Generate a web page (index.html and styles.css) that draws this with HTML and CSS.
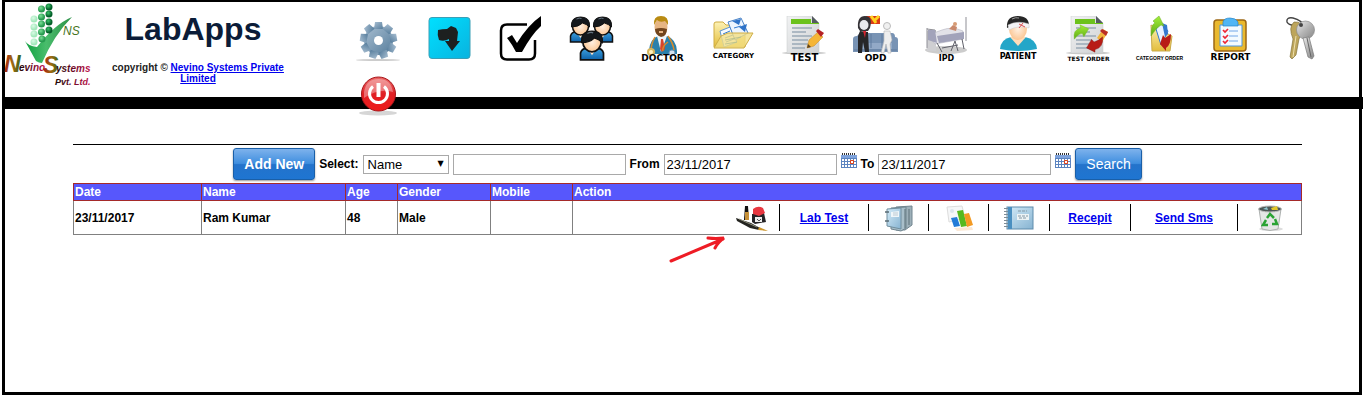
FILE: index.html
```html
<!DOCTYPE html>
<html lang="en">
<head>
<meta charset="utf-8">
<title>LabApps</title>
<link rel="stylesheet" href="styles.css">
</head>
<body>
<svg class="defs" width="0" height="0" aria-hidden="true">
  <defs>
    <linearGradient id="steel" x1="0" y1="0" x2="1" y2="1"><stop offset="0" stop-color="#a9bfd2"/><stop offset="1" stop-color="#557c9b"/></linearGradient>
    <linearGradient id="cyan" x1="0" y1="0" x2="1" y2="1"><stop offset="0" stop-color="#00e0ff"/><stop offset="1" stop-color="#09b3df"/></linearGradient>
    <radialGradient id="skin"><stop offset="0" stop-color="#fff0e2"/><stop offset="1" stop-color="#fbc795"/></radialGradient>
    <linearGradient id="shirt" x1="0" y1="0" x2="0" y2="1"><stop offset="0" stop-color="#3fa3e0"/><stop offset="1" stop-color="#0e62aa"/></linearGradient>
    <linearGradient id="folder" x1="0" y1="0" x2="0" y2="1"><stop offset="0" stop-color="#fdf2b4"/><stop offset="1" stop-color="#e3bd3c"/></linearGradient>
    <linearGradient id="paper" x1="0" y1="0" x2="1" y2="1"><stop offset="0" stop-color="#f1f2f3"/><stop offset="1" stop-color="#cfd1d3"/></linearGradient>
    <linearGradient id="lime" x1="0" y1="0" x2="0" y2="1"><stop offset="0" stop-color="#a4ee3c"/><stop offset="1" stop-color="#5cab10"/></linearGradient>
    <linearGradient id="leaf" x1="0" y1="0" x2="1" y2="0"><stop offset="0" stop-color="#10a040"/><stop offset=".45" stop-color="#49bd6c"/><stop offset="1" stop-color="#2c9148"/></linearGradient>
    <linearGradient id="rust" x1="0" y1="0" x2="1" y2="0"><stop offset="0" stop-color="#a21b10"/><stop offset=".5" stop-color="#a06a10"/><stop offset="1" stop-color="#356318"/></linearGradient>
    <linearGradient id="wine" x1="0" y1="0" x2="1" y2="0"><stop offset="0" stop-color="#1a0508"/><stop offset="1" stop-color="#c2104c"/></linearGradient>
    <radialGradient id="dotdark" cx=".4" cy=".35"><stop offset="0" stop-color="#39c469"/><stop offset="1" stop-color="#04602a"/></radialGradient>
    <radialGradient id="dotmid" cx=".4" cy=".35"><stop offset="0" stop-color="#7adf96"/><stop offset="1" stop-color="#279b50"/></radialGradient>
    <radialGradient id="dotpale" cx=".4" cy=".35"><stop offset="0" stop-color="#d9fbe5"/><stop offset="1" stop-color="#a4e8bc"/></radialGradient>
    <linearGradient id="red" x1="0" y1="0" x2="0" y2="1"><stop offset="0" stop-color="#ea6868"/><stop offset=".5" stop-color="#e02025"/><stop offset="1" stop-color="#ef1a1a"/></linearGradient>
    <linearGradient id="silver" x1="0" y1="0" x2="1" y2="1"><stop offset="0" stop-color="#ededed"/><stop offset=".5" stop-color="#b4b4b4"/><stop offset="1" stop-color="#868686"/></linearGradient>
    <linearGradient id="book" x1="0" y1="0" x2="1" y2="1"><stop offset="0" stop-color="#d4ebf8"/><stop offset="1" stop-color="#86b3d1"/></linearGradient>
    <symbol id="man" viewBox="0 0 22 27">
      <path d="M1 26v-6q1-4 6-4.500h8q5 .5 6 4.500v6z" fill="url(#shirt)" stroke="#111" stroke-width="1.500"/>
      <path d="M7 16l4 6 4-6z" fill="#ffe4c8"/>
      <ellipse cx="11" cy="10.500" rx="8" ry="8.500" fill="url(#skin)" stroke="#111" stroke-width="1.500"/>
      <path d="M2 11Q1 1 11 1t9 10q-3-3-7-4-4 4-11 4z" fill="#14181c" stroke="#111"/>
      <path d="M7 3q3-1.500 5-.5" stroke="#657480" fill="none"/>
    </symbol>
    <symbol id="sheet" viewBox="0 0 45 45">
      <ellipse cx="22" cy="37" rx="22" ry="1.500" fill="#c9c9c9"/>
      <path d="M5 0h25l7 7v30H5z" fill="url(#paper)" stroke="#c6c8ca" stroke-width=".5"/>
      <path d="M30 0l7 7h-7z" fill="#555b60"/>
      <path d="M9 3h20v4h8v1H9z" fill="#6cc21c"/>
      <path d="M10 12h20M10 16h14M10 20h20M10 24h16M10 28h20M10 32h13" stroke="#9aa9b7" stroke-width="1.300"/>
    </symbol>
    <symbol id="upleaf" viewBox="0 0 20 20"><path d="M1 19Q-1 7 9 5L8 1l11 5-6 10-2-4q-5 0-10 7z" fill="url(#lime)" stroke="#6eb52a" stroke-width=".5"/></symbol>
    <symbol id="downred" viewBox="0 0 20 20"><path d="M19 1q1 13-9 15l0 3L0 14 6 4l3 3q5-1 10-6z" fill="#b81c16" stroke="#861410" stroke-width=".5"/></symbol>
    <symbol id="calendar" viewBox="0 0 16 16">
      <path d="M0 2h16v13H0z" fill="#5c84c0"/><path d="M0 2h16v3H0z" fill="#7fa3dc"/>
      <path d="M1 1h14" stroke="#333" stroke-width="2" stroke-dasharray="1 1"/>
      <path d="M1 6h2v2H1zM4 6h2v2H4zM7 6h2v2H7zM10 6h2v2h-2zM13 6h2v2h-2zM1 9h2v2H1zM4 9h2v2H4zM7 9h2v2H7zM13 9h2v2h-2zM1 12h2v2H1zM4 12h2v2H4zM7 12h2v2H7zM10 12h2v2h-2zM13 12h2v2h-2z" fill="#fff"/>
      <path d="M9.500 7.500h3v3h-3z" fill="#fff" stroke="#e04218"/>
    </symbol>
  </defs>
</svg>
<div class="frame">
  <header class="header">
    <svg class="logo" viewBox="0 0 87 88" role="img" aria-label="Nevino Systems Pvt. Ltd.">
      <path d="M20 39q3 5 12 6Q50 22 67 15q-18 18-30 46-3 0-6-2z" fill="url(#leaf)"/>
      <g fill="url(#dotpale)"><circle cx="29" cy="17" r="3.500"/><circle cx="29" cy="25" r="3.500"/><circle cx="29" cy="32" r="3.500"/><circle cx="29" cy="40" r="3.500"/></g>
      <g fill="url(#dotmid)"><circle cx="36.500" cy="7" r="3.500"/><circle cx="36.500" cy="15" r="3.500"/><circle cx="36.500" cy="22" r="3.500"/><circle cx="36.500" cy="30" r="3.500"/><circle cx="37" cy="37" r="3.500"/></g>
      <g fill="url(#dotdark)"><circle cx="44" cy="5" r="3.500"/><circle cx="44" cy="12" r="3.500"/><circle cx="44" cy="20" r="3.500"/><circle cx="44" cy="28" r="3.500"/></g>
      <text x="58" y="33" class="logo-ns">NS</text>
      <text x="-1" y="70" class="logo-initial">N</text>
      <text x="14" y="69" class="logo-word">evino</text>
      <text x="38" y="71" class="logo-initial">S</text>
      <text x="51" y="70" class="logo-word">ystems</text>
      <text x="50" y="83" class="logo-word logo-small">Pvt. Ltd.</text>
    </svg>
    <div class="brand">
      <h1 class="title">LabApps</h1>
      <p class="copyright">copyright © <a href="#">Nevino Systems Private Limited</a></p>
    </div>
    <nav class="nav" aria-label="Main">
      <a class="nav-item" href="#" aria-label="Settings"><svg class="nav-icon" viewBox="0 0 45 45">
        <ellipse cx="22" cy="44" rx="22" ry="1" fill="#ccc"/>
        <g fill="url(#steel)"><circle cx="22.500" cy="24.500" r="14.500"/>
        <path d="M19 6h7l1 7h-9z"/><path d="M19 6h7l1 7h-9z" transform="rotate(40 22.500 24.500)"/><path d="M19 6h7l1 7h-9z" transform="rotate(80 22.500 24.500)"/><path d="M19 6h7l1 7h-9z" transform="rotate(120 22.500 24.500)"/><path d="M19 6h7l1 7h-9z" transform="rotate(160 22.500 24.500)"/><path d="M19 6h7l1 7h-9z" transform="rotate(200 22.500 24.500)"/><path d="M19 6h7l1 7h-9z" transform="rotate(240 22.500 24.500)"/><path d="M19 6h7l1 7h-9z" transform="rotate(280 22.500 24.500)"/><path d="M19 6h7l1 7h-9z" transform="rotate(320 22.500 24.500)"/></g>
        <circle cx="22.500" cy="24.500" r="4.500" fill="#fff"/></svg></a>
      <a class="nav-item" href="#" aria-label="Download"><svg class="nav-icon" viewBox="0 0 45 45">
        <rect x="2" y="1.500" width="41" height="41" rx="3" fill="url(#cyan)" stroke="#3b9fb6"/>
        <path d="M11 14q4-1 9-1l4-3 5 2 2 4-1 9h3l-8 10-7-10h4v-2q-5 3-10 1-2-5-1-10z" fill="#1d2020"/></svg></a>
      <a class="nav-item" href="#" aria-label="Approve"><svg class="nav-icon" viewBox="0 0 45 45">
        <path d="M29 8.500H9q-6 0-6 6v23q0 6 6 6h22q6 0 6-6V24" fill="none" stroke="#000" stroke-width="2.500"/>
        <path d="M9 22l5-3 5 8Q30 9 43 0v10Q34 18 24 36h-6q-4-8-9-14z"/></svg></a>
      <a class="nav-item" href="#" aria-label="Users"><svg class="nav-icon" viewBox="0 0 45 45">
        <use href="#man" x="0" y="0" width="23" height="27"/><use href="#man" x="22" y="0" width="23" height="27"/><use href="#man" x="8" y="14" width="30" height="31"/></svg></a>
      <a class="nav-item" href="#"><svg class="nav-icon" viewBox="0 0 45 45">
        <path d="M9 34q1-11 9-14h9q9 3 10 15v3H9z" fill="#2a80ab"/><path d="M17 20l4 16 6-16z" fill="#eef5f8"/><path d="M21 23l2 0 2 10-3 3-2-3z" fill="#d6452c"/>
        <path d="M15 21q-4 7-4 14M28 20q5 7 6 14M28 26q-6 4-5 9" fill="none" stroke="#d78b2c" stroke-width="1.500"/>
        <ellipse cx="21" cy="11" rx="6.500" ry="9" fill="#e6b583"/><path d="M14 9q-1-9 7-9t7 9l-3-4q-5 2-8-1z" fill="#b98b12"/><path d="M15 13q6-2 12 0 0 7-6 8-6-2-6-8z" fill="#72451d"/><path d="M19 15h4v2h-4z" fill="#e6b583"/>
        <circle cx="11" cy="36" r="4" fill="#d6b65f"/><circle cx="11" cy="36" r="2" fill="#fff2c0"/><circle cx="32" cy="37" r="3" fill="#d2e3f2" stroke="#7097b7"/>
        <text x="22.500" y="44.500" class="cap cap-9">DOCTOR</text></svg></a>
      <a class="nav-item" href="#"><svg class="nav-icon" viewBox="0 0 45 45">
        <path d="M3 31V8q0-2 2-2h7l3 3h19v22z" fill="url(#folder)" stroke="#cfac42"/>
        <path d="M9 15l10-4 7 15-13 5z" fill="#f7fbff" stroke="#5b94d4"/><path d="M17 6l13-4 7 15-13 7z" fill="#edf5fe" stroke="#4b84c8"/><path d="M21 5l9-2-2 6zM28 11l8-3-2 8z" fill="#2f73c8"/><path d="M12 18l7-3M14 22l8-3M15 26l8-3M23 12l7-2" stroke="#337bd0"/>
        <path d="M10 20l7-3h25l-9 15H3z" fill="#f3de85" fill-opacity=".8" stroke="#cfae47"/>
        <path d="M14 24l16-3M14 28l12-2" stroke="#9fb387" opacity=".6"/>
        <text x="22.500" y="42" class="cap cap-7">CATEGORY</text></svg></a>
      <a class="nav-item" href="#"><svg class="nav-icon" viewBox="0 0 45 45">
        <use href="#sheet" width="45" height="45"/>
        <path d="M25 32l2-8L36 16l5 5-9 9z" fill="#f5b536" stroke="#c78926" stroke-width=".5"/><path d="M25 32l1-4 3 3z" fill="#5d431f"/><path d="M34 15l2-2 6 4-3 4z" fill="#b52125"/>
        <text x="22.500" y="44.500" class="cap cap-10">TEST</text></svg></a>
      <a class="nav-item" href="#"><svg class="nav-icon" viewBox="0 0 45 45">
        <path d="M13 0h14v8H13z" fill="#d93918"/><path d="M18 0l5 7M22 4l4-4" stroke="#ffd11e" stroke-width="3"/>
        <path d="M0 23q0-3 4-3l3-3h32q3 0 3 4 3 0 3 3v12H0z" fill="#7893b4"/><path d="M5 27h34v6H5z" fill="#92a9c7"/><path d="M18 18v14M29 18v14M1 34h43" stroke="#5e7b9e"/>
        <path d="M7 15l8 1 1 20h-4l-2-10-1 11H5V20z" fill="#262628"/><path d="M5 12q-1-12 7-12t5 12l-2 3H7z" fill="#343236"/><ellipse cx="11" cy="9" rx="4.500" ry="5" fill="#e9e9ed"/><path d="M10 15h3l-1 7z" fill="#d42531"/>
        <circle cx="34" cy="10" r="3.500" fill="#f0f0f0" stroke="#bbb"/><path d="M31 15h6l2 9-2 4 1 9h-3l-2-9-2 9h-3l3-12z" fill="#eee" stroke="#b3b3b3" stroke-width=".6"/>
        <text x="22.500" y="44.500" class="cap cap-9">OPD</text></svg></a>
      <a class="nav-item" href="#"><svg class="nav-icon" viewBox="0 0 45 45">
        <ellipse cx="22" cy="34" rx="21" ry="4" fill="#ccc"/><path d="M3 15l9-1v21H3z" fill="#cfcfd2"/>
        <path d="M3 12v20M3 13l8 1v12M42 1v24" fill="none" stroke="#8f8f96"/>
        <path d="M4 19l14-5q10-4 21 1v8l-28 5z" fill="#e2e2e8" stroke="#b3b3bf" stroke-width=".6"/><path d="M4 14h7l2 13-9-3zM13 20l27-4v7l-25 4z" fill="#a2a3ba"/><path d="M25 13l4-4 4 2-1 4z" fill="#c98a6d"/><circle cx="31" cy="8" r="2" fill="#d69b74"/>
        <path d="M13 27l5 9M38 23l2 10M31 25l-4 10M31 25l3 10M18 32l16-3" stroke="#60616a"/>
        <text x="22.500" y="44.500" class="cap cap-8">IPD</text></svg></a>
      <a class="nav-item" href="#"><svg class="nav-icon" viewBox="0 0 45 45">
        <path d="M5 33q1-10 11-12h14q11 2 12 12-18 4-37 0z" fill="#24a6c8"/><path d="M15 21l8 9 8-9z" fill="#ffdcb9"/>
        <ellipse cx="23" cy="13" rx="9" ry="11" fill="url(#skin)"/><path d="M12 12Q11 0 23 0t11 12q-9-7-22 0z" fill="#262626"/><path d="M17 3q4-2 7-1" stroke="#999" fill="none"/>
        <path d="M13 9q10-5 21-1v4q-11-3-20 2z" fill="#f3f3f5" stroke="#ccc" stroke-width=".5"/><path d="M24 8l6 3M28 7l-4 5" stroke="#db4d4d"/>
        <text x="23" y="43" class="cap cap-8">PATIENT</text></svg></a>
      <a class="nav-item" href="#"><svg class="nav-icon" viewBox="0 0 45 45">
        <use href="#sheet" width="45" height="45"/><path d="M31 22l6-9 5 3-6 10z" fill="#f1b43c"/><path d="M34 15l2-2 6 3-2 4z" fill="#ba2d26"/>
        <use href="#upleaf" x="5" y="8" width="21" height="16"/><use href="#downred" x="19" y="20" width="20" height="17"/>
        <text x="22.500" y="44.500" class="cap cap-6">TEST ORDER</text></svg></a>
      <a class="nav-item" href="#"><svg class="nav-icon" viewBox="0 0 45 45">
        <path d="M14 9l9 5 12 6-2 15H15z" fill="url(#folder)" stroke="#c9aa4a"/><path d="M19 13l5-6 7 8-7 14z" fill="#e9f3fe" stroke="#3479cf"/><path d="M25 7l5 2 1 9-3 3z" fill="#3479cf"/>
        <path d="M14 20Q14 8 18 7l-2-2 6-5 5 10-3-1q-5 3-10 11z" fill="url(#lime)" stroke="#66aa20" stroke-width=".5"/>
        <path d="M34 18q0 11-5 14v3l-6-7 3-9 2 3z" fill="#b81c16"/>
        <text x="22.500" y="44" class="cap cap-5">CATEGORY ORDER</text></svg></a>
      <a class="nav-item" href="#"><svg class="nav-icon" viewBox="0 0 45 45">
        <rect x="6" y="4" width="32" height="31" rx="3" fill="#eab92e" stroke="#9c6714" stroke-width="1.500"/><path d="M12 9h22v21H12z" fill="#f3faff" stroke="#4d96df"/>
        <path d="M15 10V6q1-4 7-4t8 4v4z" fill="#50b5f5" stroke="#2785c8" stroke-width=".7"/>
        <path d="M21 15h9M21 20h9M21 25h9" stroke="#70a6e8"/><path d="M15 14l2 2 3-3M15 20l2 2 3-3M15 25l2 2 3-3" fill="none" stroke="#ed2634" stroke-width="1.700"/>
        <text x="22.500" y="44" class="cap cap-9">REPORT</text></svg></a>
      <a class="nav-item" href="#" aria-label="Password"><svg class="nav-icon" viewBox="0 0 45 45">
        <path d="M18 9q-8 1-10-3-1-5 6-4 9 2 11 9" fill="none" stroke="#444" stroke-width="1.500"/>
        <path d="M15 6q9-1 9 9l-4 8-3 16-4 4-2-2 3-18q-5-12 1-17z" fill="#bda55b" stroke="#75642f" stroke-width=".6"/><path d="M17 20l-3 21" stroke="#eee0ae"/>
        <circle cx="26.500" cy="14" r="9" fill="url(#silver)" stroke="#898989" stroke-width=".7"/><path d="M24 22l6-1 5 19-2 3-4-2z" fill="url(#silver)" stroke="#777" stroke-width=".7"/><path d="M28 22l4 19" stroke="#666"/><circle cx="22" cy="9" r="2" fill="#444"/></svg></a>
      <a class="nav-item" href="#" aria-label="Log out"><svg class="nav-icon" viewBox="0 0 45 45">
        <ellipse cx="22" cy="38" rx="19" ry="2.500" fill="#bbb" opacity=".6"/><circle cx="22.500" cy="19" r="17" fill="url(#red)" stroke="#a9171b"/>
        <path d="M8 17q2-13 14.500-13T37 17q-14-4-29 6z" fill="#fff" opacity=".35"/>
        <path d="M17 11.500a9 9 0 1 0 11 0" fill="none" stroke="#fff" stroke-width="3"/><path d="M20.500 8h4v14h-4z" fill="#fff"/></svg></a>
    </nav>
  </header>
  <div class="bar"></div>
  <main class="content">
    <form class="filters">
      <button class="btn btn-strong" type="button">Add New</button>
      <label class="label" for="field">Select:</label>
      <span class="picker"><select class="select" id="field"><option>Name</option><option>Mobile</option></select></span>
      <input class="input" type="text" aria-label="Search text">
      <label class="label" for="from">From</label>
      <input class="input" id="from" type="text" value="23/11/2017">
      <button class="cal" type="button" aria-label="Pick start date"><svg class="cal-icon"><use href="#calendar"/></svg></button>
      <label class="label" for="to">To</label>
      <input class="input" id="to" type="text" value="23/11/2017">
      <button class="cal" type="button" aria-label="Pick end date"><svg class="cal-icon"><use href="#calendar"/></svg></button>
      <button class="btn" type="submit">Search</button>
    </form>
    <div class="results">
      <table class="table">
        <colgroup><col class="c-date"><col class="c-name"><col class="c-age"><col class="c-gender"><col class="c-mobile"><col></colgroup>
        <thead><tr><th>Date</th><th>Name</th><th>Age</th><th>Gender</th><th>Mobile</th><th>Action</th></tr></thead>
        <tbody><tr><td>23/11/2017</td><td>Ram Kumar</td><td>48</td><td>Male</td><td></td>
          <td class="action-cell"><div class="actions">
            <a class="action w-56" href="#" aria-label="Sign"><svg class="action-icon" viewBox="0 0 32 28">
              <path d="M9 2h3l1 14H8z" fill="#111"/><path d="M9 8h4v8H9z" fill="#c69038"/>
              <path d="M16 10l12-1 2 9-11 2-3-2z" fill="#252326"/><path d="M17 5q5-4 10-1l2 5-6 3-6-2z" fill="#e83740"/><path d="M19 13h7v5h-7z" fill="#eee"/><path d="M21 15l2 2 2-2" stroke="#555" fill="none"/>
              <path d="M0 14l15 5 9 5-1 2-9-2L1 17z" fill="#242420"/><path d="M3 15l18 8" stroke="#8b8b78"/><path d="M23 23l9 4-10-1z" fill="#cc952d"/></svg></a>
            <a class="action w-89" href="#">Lab Test</a>
            <a class="action w-60" href="#" aria-label="Files"><svg class="action-icon" viewBox="0 0 32 28">
              <path d="M13 3l16-1v19l-7 5H13z" fill="#9db0b9" stroke="#71858f"/><path d="M8 4l15-1v21l-5 3-10-2z" fill="#a9bfca" stroke="#71858f"/><path d="M4 5l14-1v21L4 22z" fill="url(#book)" stroke="#708e9e"/><path d="M8 8l8-1v6H8z" fill="#eff6f9"/><path d="M10 9h5M10 11h5" stroke="#9cafba" stroke-width=".6"/><path d="M2 8h4M2 17h4" stroke="#586b74" stroke-width="1.500"/><path d="M22 5v19M26 5v16" stroke="#5c7079"/></svg></a>
            <a class="action w-60" href="#" aria-label="Charts"><svg class="action-icon" viewBox="0 0 32 28">
              <path d="M4 3l15-1 3 12-16 4z" fill="#f6f7f8" stroke="#ddd"/><circle cx="9" cy="7" r="2" fill="#dce5ec"/><path d="M8 14l6-1 3 9-6 1z" fill="#237bd7"/><path d="M14 7l6-1 4 16-6 1z" fill="#55b91f"/><path d="M21 10l5-1 4 12-6 2z" fill="#f39a23"/><path d="M11 24l18-1 1 3-16 1z" fill="#f8d9b7" opacity=".6"/></svg></a>
            <a class="action w-61" href="#" aria-label="Notebook"><svg class="action-icon" viewBox="0 0 32 28">
              <rect x="4" y="3" width="26" height="22" fill="url(#book)" stroke="#5f8cac"/><path d="M5 3h4v22H5z" fill="#4a8fc0"/><path d="M3 4v20" stroke="#7e8c95" stroke-width="4" stroke-dasharray="1 2"/><path d="M14 10h12v6H14z" fill="#edf3f5"/><path d="M15 7h9M15 12h10M16 14h8" stroke="#8497a4" stroke-dasharray="3 1"/></svg></a>
            <a class="action w-81" href="#">Recepit</a>
            <a class="action w-107" href="#">Send&nbsp;Sms</a>
            <a class="action w-63" href="#" aria-label="Delete"><svg class="action-icon" viewBox="0 0 32 28">
              <ellipse cx="17" cy="25" rx="12" ry="2" fill="#ddd"/><path d="M5 5l3 20q8 3 16 0l3-20z" fill="#e4e6e5" stroke="#adb1af"/><ellipse cx="16" cy="5" rx="11.500" ry="3" fill="#4d5856" stroke="#bbb"/><path d="M17 4l6-2 1 4h-6z" fill="#e3c72b"/><path d="M9 5l4-2 1 3z" fill="#8ec4ce"/>
              <path d="M13 14l3-4 4 4M21 15l2 5h-5M14 21H9l3-5" fill="none" stroke="#2aa334" stroke-width="2.500"/></svg></a>
          </div></td></tr></tbody>
      </table>
      <svg class="pointer" viewBox="0 0 58 28" aria-hidden="true"><path d="M2 25L54 3M39 2q8 1 16 0-6 4-9 10" fill="none" stroke="#ee1c25" stroke-width="3" stroke-linecap="round"/></svg>
    </div>
  </main>
</div>
</body>
</html>
```
FILE: styles.css
```css
* { box-sizing: border-box; }
body { margin: 0; background: #fff; color: #000; font: bold 12px/14px "Liberation Sans", Arial, sans-serif; }
a { color: #00e; }
.defs { position: absolute; }
.frame { margin: 0 4px 5px 2px; min-height: calc(100vh - 5px); border: 3px solid #000; border-top-width: 2px; }

.header { display: flex; align-items: flex-start; }
.logo { flex: none; width: 87px; height: 88px; overflow: visible; }
.logo-ns { font: italic 12px "Liberation Sans", sans-serif; fill: #46741c; }
.logo-initial { font: italic bold 23px "Liberation Sans", sans-serif; fill: url(#rust); }
.logo-word { font: italic bold 10px "Liberation Sans", sans-serif; fill: url(#wine); }
.logo-small { font-size: 9px; }
.brand { flex: none; width: 180px; margin-left: 16px; padding-top: 9px; text-align: center; }
.title { margin: 0; padding-right: 10px; font-size: 32px; line-height: 36px; color: #0b1c38; }
.copyright { margin: 15px 0 0; font-size: 10px; line-height: 11px; color: #222; }
.nav { flex: 1; display: flex; flex-wrap: wrap; margin: 0 0 -23px 55px; position: relative; z-index: 1; }
.nav-item { width: 71px; padding: 14px 13px 0; color: #000; }
.nav-icon { display: block; width: 45px; height: 45px; overflow: visible; }
.cap { font-family: "DejaVu Sans", sans-serif; font-weight: bold; text-anchor: middle; fill: #000; }
.cap-5 { font-family: "Liberation Sans", sans-serif; font-size: 5px; }
.cap-6 { font-size: 6px; }
.cap-7 { font-size: 7px; }
.cap-8 { font-size: 8px; }
.cap-9 { font-size: 9px; }
.cap-10 { font-size: 10px; }
.bar { height: 12px; background: #000; margin: 0 -4px 0 -3px; }

.content { padding: 35px 57px 0 68px; }
.filters { display: flex; justify-content: center; align-items: center; gap: 4px; padding: 3px 0; border-top: 1px solid #000; }
.btn { height: 32px; padding: 0 10px; border: 1px solid #1a5fa8; border-radius: 3px; background: linear-gradient(#7eb2ec, #3f8edf 48%, #2473cb 52%, #1e75d2); box-shadow: 0 1px 2px #999; color: #fff; font: 14px "Liberation Sans", Arial, sans-serif; }
.btn-strong { font-weight: bold; }
.picker { position: relative; display: flex; }
.picker::after { content: "▼"; position: absolute; right: 5px; top: 2px; font: 8px/14px "DejaVu Sans", sans-serif; pointer-events: none; }
.select { appearance: none; width: 86px; height: 19px; padding: 0 4px; border: 1px solid #a9a9a9; border-radius: 0; background: #fff; color: #000; font: 13px "Liberation Sans", Arial, sans-serif; }
.input { width: 173px; height: 21px; padding: 1px 2px; border: 1px solid #a9a9a9; background: #fff; color: #000; font: 13px "Liberation Sans", Arial, sans-serif; }
.cal { padding: 0 0 6px; border: 0; background: none; }
.cal-icon { display: block; width: 16px; height: 16px; }

.results { position: relative; }
.table { width: 100%; table-layout: fixed; border-collapse: collapse; border: 1px solid #808080; }
.c-date { width: 128px; }
.c-name { width: 144px; }
.c-age { width: 52px; }
.c-gender { width: 93px; }
.c-mobile { width: 82px; }
.table th { padding: 1px; height: 17px; border: 1px solid #a52a2a; background: #5757fc; color: #fff; text-align: left; }
.table td { padding: 1px; border: 1px solid #808080; }
.table .action-cell { padding: 3px 0; }
.actions { display: flex; justify-content: flex-end; }
.action { display: flex; align-items: center; justify-content: center; height: 27px; border-right: 1px solid #000; }
.action:last-child { border-right: 0; }
.action-icon { width: 32px; height: 28px; }
.w-56 { width: 56px; }
.w-60 { width: 60px; }
.w-61 { width: 61px; }
.w-63 { width: 63px; }
.w-81 { width: 81px; }
.w-89 { width: 89px; }
.w-107 { width: 107px; }
.pointer { position: absolute; right: 575px; top: 53px; width: 58px; height: 28px; pointer-events: none; }
```
